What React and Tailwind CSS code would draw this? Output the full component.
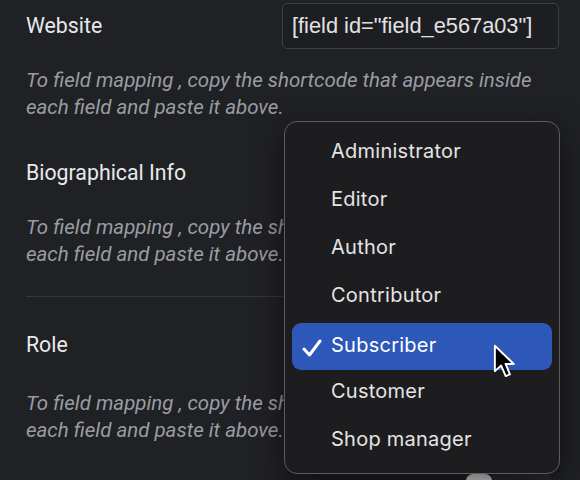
import React from 'react';

const roles = ['Administrator', 'Editor', 'Author', 'Contributor', 'Subscriber', 'Customer', 'Shop manager'];

function HelpText() {
  return (
    <p className="text-[20.5px] leading-[27px] italic text-[#9a9ca3] whitespace-nowrap">
      To field mapping , copy the shortcode that appears inside
      <br />
      each field and paste it above.
    </p>
  );
}

function Cursor() {
  return (
    <svg width="23" height="35" viewBox="0 0 13 20" className="absolute left-[493px] top-[344px]">
      <path d="M1 1 L1 15.5 L4.6 12.3 L7.2 18.3 L9.6 17.3 L7.1 11.4 L11.8 11.4 Z" fill="#000" stroke="#fff" strokeWidth="1.1" strokeLinejoin="round" />
    </svg>
  );
}

function RoleMenu() {
  return (
    <div className="absolute left-[284px] top-[121px] w-[276px] h-[353px] rounded-[13px] border border-[#5c5d62] bg-[#1d1d1f] shadow-[0_10px_30px_rgba(0,0,0,0.55)] pt-[5px] px-[7px] font-['Inter',sans-serif]">
      {roles.map((role) => {
        const selected = role === 'Subscriber';
        return (
          <div
            key={role}
            className={
              selected
                ? 'flex items-center h-[47px] mt-[4px] -mb-[3px] rounded-[9px] bg-[#2d57b9] text-white'
                : 'flex items-center h-[48px] text-[#e4e4e6]'
            }
          >
            <div className="w-[39px] flex justify-end pr-[9px]">
              {selected && (
                <svg width="20" height="18" viewBox="0 0 20 18" className="mt-[2px]">
                  <path d="M2 10 L7.5 16 L18 2" fill="none" stroke="#fff" strokeWidth="3" strokeLinecap="round" strokeLinejoin="round" />
                </svg>
              )}
            </div>
            <span className={selected ? 'relative -top-[2px] text-[20px] leading-none tracking-[0.25px]' : 'text-[20px] leading-none tracking-[0.25px]'}>
              {role}
            </span>
          </div>
        );
      })}
    </div>
  );
}

export default function App() {
  return (
    <div className="relative w-[580px] h-[480px] overflow-hidden bg-[#202125] font-['Roboto',sans-serif]">
      <div className="pl-[26px] pr-[21px] pt-[3px]">
        {/* Website */}
        <div className="flex items-center justify-between h-[46px]">
          <span className="text-[21.3px] text-[#e9e9eb]">Website</span>
          <div className="w-[277px] h-[46px] rounded-[5px] border border-[#3f4045] bg-[#1d1e22] flex items-center px-[9px]">
            <span className="text-[21.8px] text-[#e2e2e4] font-['Liberation_Sans',sans-serif]">[field id="field_e567a03"]</span>
          </div>
        </div>
        <div className="mt-[18px]">
          <HelpText />
        </div>

        {/* Biographical Info */}
        <div className="flex items-center justify-between h-[46px] mt-[29px]">
          <span className="text-[21.3px] text-[#e9e9eb]">Biographical Info</span>
        </div>
        <div className="mt-[18px]">
          <HelpText />
        </div>

        <div className="mt-[28px] h-px bg-[#35363b]" />

        {/* Role */}
        <div className="flex items-center justify-between h-[46px] mt-[25px]">
          <span className="text-[21.3px] text-[#e9e9eb]">Role</span>
        </div>
        <div className="mt-[22px]">
          <HelpText />
        </div>

        <div className="mt-[30px] ml-[440px] flex items-center">
          <div className="w-[26px] h-[14px] rounded-full bg-[#d8d8da]" />
          <div className="w-[60px] h-[14px] rounded-r-[6px] bg-[#2c2d32]" />
        </div>
      </div>

      <RoleMenu />
      <Cursor />
    </div>
  );
}
